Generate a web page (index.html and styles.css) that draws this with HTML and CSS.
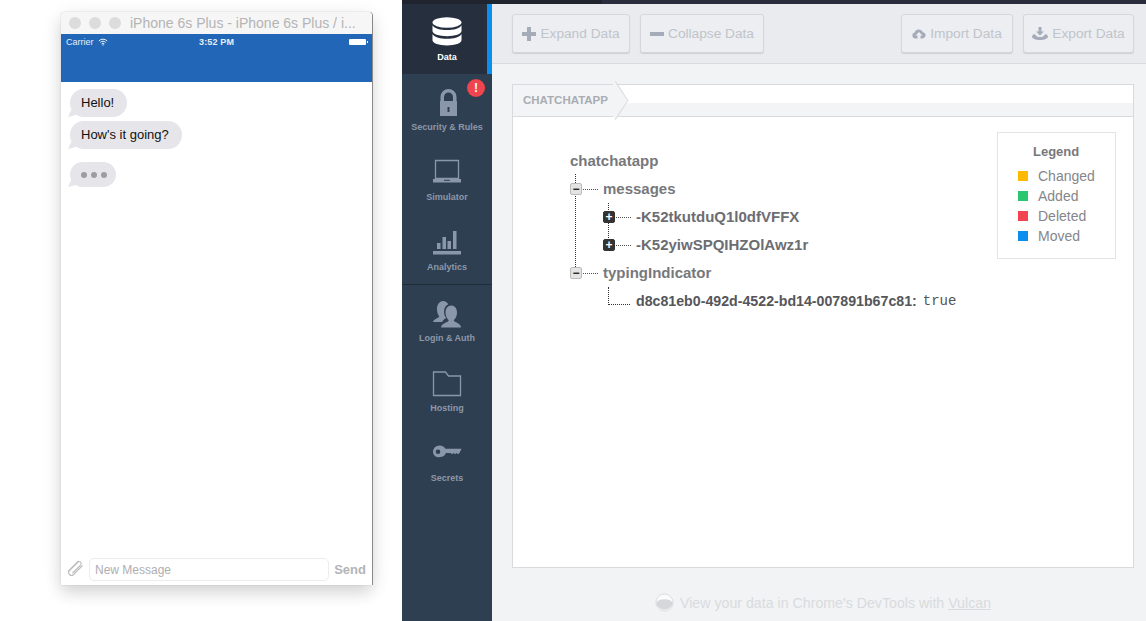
FILE: index.html
```html
<!DOCTYPE html>
<html lang="en">

<head>
    <title>Chat demo</title>
    <meta charset="utf-8">
    <link rel="stylesheet" href="styles.css">
</head>

<body>
    <div class="sim_pane">
        <div class="sim_window">
            <div class="sim_titlebar">
                <span class="sim_light"></span>
                <span class="sim_light"></span>
                <span class="sim_light"></span>
                <span class="sim_title">iPhone 6s Plus - iPhone 6s Plus / i...</span>
            </div>
            <div class="sim_navbar">
                <div class="sim_status">
                    <span class="sim_carrier">Carrier
                        <svg class="sim_wifi" viewBox="0 0 12 9" width="10" height="8">
                            <path d="M1 3.2a7 7 0 0 1 10 0M2.7 5a4.6 4.6 0 0 1 6.6 0M4.4 6.7a2.2 2.2 0 0 1 3.2 0" fill="none" stroke="#fff" stroke-width="1.1"/>
                            <circle cx="6" cy="8" r=".8" fill="#fff"/>
                        </svg>
                    </span>
                    <span class="sim_time">3:52 PM</span>
                    <span class="sim_battery"></span>
                </div>
            </div>
            <div class="sim_messages">
                <div class="bubble">Hello!</div>
                <div class="bubble">How's it going?</div>
                <div class="bubble bubble_typing"><i></i><i></i><i></i></div>
            </div>
            <div class="sim_input">
                <svg class="sim_clip" viewBox="0 0 18 18" width="18" height="18">
                    <path d="M16.5 5.5 7.5 14.5a2.8 2.8 0 0 1-4-4l8.500-8.500a2 2 0 0 1 2.800 2.800L6.500 13M12.500 1 2 11.500" fill="none" stroke="#bcbcbc" stroke-width="1.1"/>
                </svg>
                <div class="sim_field">New Message</div>
                <span class="sim_send">Send</span>
            </div>
        </div>
    </div>

    <div class="dash">
        <div class="dash_topbar"></div>
        <div class="dash_body">
            <nav class="sidebar">
                <a class="side_item side_item-active">
                    <svg viewBox="0 0 30 30" width="30" height="30">
                        <ellipse cx="15" cy="5.5" rx="14.5" ry="5.2" fill="#fff"/>
                        <path d="M.5 8.3c2 3.6 8 4.7 14.5 4.7s12.5-1.1 14.5-4.7V14c0 3.100-6.500 5.200-14.500 5.200S.5 17.100.5 14zM.5 17c2 3.600 8 4.700 14.500 4.700s12.500-1.100 14.500-4.700v6.300c0 3.100-6.500 5.200-14.500 5.200S.5 26.400.5 23.300z" fill="#fff"/>
                    </svg>
                    <span>Data</span>
                </a>
                <a class="side_item">
                    <span class="side_badge">!</span>
                    <svg viewBox="0 0 30 30" width="30" height="30">
                        <path d="M8.500 15V10a8 8 0 0 1 16 0v5H21v-5a4.500 4.500 0 0 0-9 0v5z" fill="#8a97aa"/>
                        <path d="M8 14h17v15H8z" fill="#8a97aa"/>
                        <path d="M15.500 20h2v5h-2z" fill="#2f3f52"/>
                    </svg>
                    <span>Security &amp; Rules</span>
                </a>
                <a class="side_item">
                    <svg viewBox="0 0 30 30" width="30" height="30">
                        <path d="M3.500 3.500h23v18h-23z" fill="none" stroke="#8a97aa" stroke-width="1.300"/>
                        <path d="M1 22h28v3.500H1z" fill="#8a97aa"/>
                        <path d="M12 22.800h6v1h-6z" fill="#2f3f52"/>
                    </svg>
                    <span>Simulator</span>
                </a>
                <a class="side_item side_item-last">
                    <svg viewBox="0 0 30 30" width="30" height="30">
                        <path d="M1 24h28v3.500H1zM5 16h3.500v6H5zM10.500 10H14v12h-3.500zM15.500 14H19v8h-3.500zM21 4h3.500v18H21z" fill="#8a97aa"/>
                    </svg>
                    <span>Analytics</span>
                </a>
                <a class="side_item">
                    <svg viewBox="0 0 30 30" width="30" height="30">
                        <path d="M1 24c.5-3 5-3.500 6.300-5.500-1.500-2-2.300-4.500-2.300-7.500C5 7 7.300 3 11 3c2.500 0 4.300 1.300 5.200 3.300-2.800 1.200-4.200 4-4.200 7.400 0 2.500.8 4.800 2.200 6.300-1.800 1-3.400 2.300-4 4z" fill="#8a97aa"/>
                        <path d="M9 29.500c.3-4.500 6.500-4.500 7.800-7.300-2-1.800-3.300-4.400-3.300-7.700C13.500 10.500 15.800 7.500 19.300 7.500S25 10.500 25 14.500c0 3.300-1.200 5.900-3.300 7.700C23 25 29 25 29 29.500z" fill="#8a97aa"/>
                    </svg>
                    <span>Login &amp; Auth</span>
                </a>
                <a class="side_item">
                    <svg viewBox="0 0 30 30" width="30" height="30">
                        <path d="M1.500 4h12l3 4h12v19.500h-27z" fill="none" stroke="#8a97aa" stroke-width="1.300"/>
                    </svg>
                    <span>Hosting</span>
                </a>
                <a class="side_item">
                    <svg viewBox="0 0 30 30" width="30" height="30">
                        <path fill-rule="evenodd" d="M7.500 7.500c2.800 0 5 1.300 5.900 3.200H29.500L27.500 15l-1.500 1.300-1.500-1.300-1.500 1.300-1.500-1.300-1.500 1.300-1.500-1.300h-4.600c-.9 2.400-3.100 4-5.900 4C4 20 1 17.200 1 13.800S4 7.500 7.500 7.500zM6 11.500a2.300 2.300 0 1 0 0 4.600 2.300 2.300 0 0 0 0-4.600z" fill="#8a97aa"/>
                    </svg>
                    <span>Secrets</span>
                </a>
            </nav>

            <main class="content">
                <div class="toolbar">
                    <button class="tool_btn tool_btn-expand">
                        <svg viewBox="0 0 14 14" width="14" height="14"><path d="M5 0h4v5h5v4H9v5H5V9H0V5h5z" fill="#a6abba"/></svg>
                        Expand Data
                    </button>
                    <button class="tool_btn tool_btn-collapse">
                        <svg viewBox="0 0 14 14" width="14" height="14"><path d="M0 5h14v4H0z" fill="#a6abba"/></svg>
                        Collapse Data
                    </button>
                    <button class="tool_btn tool_btn-import">
                        <svg viewBox="0 0 14 14" width="14" height="14"><path d="M3 11.500a3 3 0 0 1-.4-5.900A4.500 4.500 0 0 1 11 5.200a3.200 3.200 0 0 1 0 6.300H8.500V8.500h2L7 5 3.500 8.500h2v3z" fill="#a6abba"/></svg>
                        Import Data
                    </button>
                    <button class="tool_btn tool_btn-export">
                        <svg viewBox="0 0 16 16" width="16" height="16"><path d="M6.500 1h3v4.500H12L8 9.500l-4-4h2.500zM2.500 8 5 10.500c1 .7 5 .7 6 0L13.500 8c1.500.7 2.500 1.500 2.500 2.500 0 2-3.500 3.500-8 3.500s-8-1.500-8-3.500C0 9.500 1 8.700 2.500 8z" fill="#a6abba"/></svg>
                        Export Data
                    </button>
                </div>

                <div class="panel">
                    <div class="panel_head">
                        <div class="panel_tab">CHATCHATAPP</div>
                    </div>
                    <div class="panel_body">
                        <div class="tree">
                            <div class="tree_root">chatchatapp</div>
                            <ul class="tree_list tree_list-top">
                                <li>
                                    <div class="tree_row"><span class="toggle">&minus;</span><span class="tree_dots"></span><b>messages</b></div>
                                    <ul class="tree_list tree_list-sub">
                                        <li><div class="tree_row"><span class="toggle toggle-dark">+</span><span class="tree_dots"></span><b class="tree_key">-K52tkutduQ1l0dfVFFX</b></div></li>
                                        <li><div class="tree_row"><span class="toggle toggle-dark">+</span><span class="tree_dots"></span><b class="tree_key">-K52yiwSPQIHZOlAwz1r</b></div></li>
                                    </ul>
                                </li>
                                <li>
                                    <div class="tree_row"><span class="toggle">&minus;</span><span class="tree_dots"></span><b>typingIndicator</b></div>
                                    <div class="tree_row tree_row-leaf"><span class="tree_elbow"></span><b class="tree_key">d8c81eb0-492d-4522-bd14-007891b67c81:</b><code>true</code></div>
                                </li>
                            </ul>
                        </div>
                        <div class="legend">
                            <h4>Legend</h4>
                            <div class="legend_row"><i class="swatch swatch-changed"></i>Changed</div>
                            <div class="legend_row"><i class="swatch swatch-added"></i>Added</div>
                            <div class="legend_row"><i class="swatch swatch-deleted"></i>Deleted</div>
                            <div class="legend_row"><i class="swatch swatch-moved"></i>Moved</div>
                        </div>
                    </div>
                </div>

                <div class="foot">
                    <svg viewBox="0 0 20 20" width="19" height="19">
                        <circle cx="10" cy="10" r="9" fill="#fafbfb" stroke="#d8dadd" stroke-width="1"/>
                        <path d="M1.200 10.500C3 7.500 6 6.500 10 6.500s7 1 8.800 4A9 9 0 0 1 1.200 10.500z" fill="#d5d7da"/>
                    </svg>
                    <span>View your data in Chrome's DevTools with <u>Vulcan</u></span>
                </div>
            </main>
        </div>
    </div>
</body>

</html>
```

FILE: styles.css
```css
* {
    box-sizing: border-box;
}

body {
    font-family: "Liberation Sans", Arial, sans-serif;
    display: flex;
    width: 1146px;
    height: 621px;
    margin: 0;
    overflow: hidden;
    background: #fff;
}

/* simulator */

.sim_pane {
    width: 402px;
    flex: none;
    padding: 12px 0 0 61px;
}

.sim_window {
    width: 311px;
    height: 573px;
    display: flex;
    flex-direction: column;
    background: #fff;
    border-radius: 4px 4px 0 0;
    box-shadow: 0 0 1px 0 #999, 1px 0 0 #888, 0 8px 16px rgba(0, 0, 0, .14), 0 2px 24px rgba(0, 0, 0, .06);
}

.sim_titlebar {
    height: 22px;
    flex: none;
    display: flex;
    align-items: center;
    padding-left: 8px;
    background: #f6f6f6;
    border-radius: 4px 4px 0 0;
}

.sim_light {
    width: 12px;
    height: 12px;
    margin-right: 8px;
    border-radius: 50%;
    background: #dcdcdc;
}

.sim_title {
    margin-left: 1px;
    font-size: 14px;
    color: #b4b4b4;
    white-space: nowrap;
}

.sim_navbar {
    height: 48px;
    flex: none;
    background: #2267b7;
}

.sim_status {
    display: flex;
    align-items: center;
    height: 16px;
    padding: 0 5px;
    position: relative;
    font-size: 9px;
    color: #e6eef8;
}

.sim_carrier {
    display: flex;
    align-items: center;
    gap: 4px;
}

.sim_time {
    position: absolute;
    left: 138px;
    font-weight: bold;
    letter-spacing: .15px;
}

.sim_battery {
    position: relative;
    width: 17px;
    height: 6px;
    margin-left: auto;
    margin-right: 1px;
    background: #fff;
    border-radius: 1px;
}

.sim_battery::after {
    content: "";
    position: absolute;
    right: -2px;
    top: 2px;
    width: 1px;
    height: 2px;
    background: #fff;
}

.sim_messages {
    flex: 1;
    display: flex;
    flex-direction: column;
    align-items: flex-start;
    padding: 7px 0 0 9px;
}

.bubble {
    position: relative;
    height: 28px;
    margin-bottom: 4px;
    padding: 0 13px 0 11px;
    font-size: 13px;
    line-height: 27px;
    color: #111;
    background: #e5e5ea;
    border-radius: 14px;
}

.bubble::before {
    content: "";
    position: absolute;
    left: -2px;
    bottom: 0;
    width: 10px;
    height: 9px;
    background: #e5e5ea;
    clip-path: polygon(0 100%, 40% 0, 100% 30%, 70% 80%);
}

.bubble_typing {
    display: flex;
    align-items: center;
    gap: 4px;
    width: 46px;
    height: 25px;
    margin-top: 9px;
    padding: 0 0 0 11px;
}

.bubble_typing i {
    width: 6px;
    height: 6px;
    border-radius: 50%;
    background: #9c9ca2;
}

.sim_input {
    height: 44px;
    flex: none;
    display: flex;
    align-items: center;
    padding: 12px 6px 0 5px;
}

.sim_clip {
    flex: none;
    width: 18px;
    margin-right: 5px;
}

.sim_field {
    width: 240px;
    height: 23px;
    padding-left: 5px;
    font-size: 12px;
    line-height: 22px;
    color: #aeaeb2;
    border: 1px solid #ececec;
    border-radius: 5px;
}

.sim_send {
    margin-left: auto;
    font-size: 13px;
    font-weight: bold;
    color: #b4b4b6;
}

/* dashboard */

.dash {
    flex: 1;
    display: flex;
    flex-direction: column;
    min-width: 0;
}

.dash_topbar {
    height: 4px;
    flex: none;
    background: linear-gradient(to right, #20242e 200px, #2a2b3c 200px);
}

.dash_body {
    flex: 1;
    display: flex;
    min-height: 0;
}

.sidebar {
    width: 90px;
    flex: none;
    background: #2f3f52;
}

.side_item {
    position: relative;
    height: 70px;
    display: flex;
    flex-direction: column;
    align-items: center;
    padding-top: 13px;
    font-size: 9px;
    font-weight: bold;
    color: #8c98a8;
}

.side_item span {
    margin-top: 5px;
}

.side_item-active {
    color: #fff;
    background: #262f3e;
    border-right: 5px solid #0a8fef;
    padding-left: 5px;
}

.side_item-last {
    height: 71px;
    border-bottom: 1px solid #212c39;
}

.side_item .side_badge {
    position: absolute;
    top: 5px;
    left: 65px;
    width: 18px;
    height: 18px;
    margin: 0;
    font-size: 12px;
    line-height: 18px;
    text-align: center;
    color: #fff;
    background: #f0444e;
    border-radius: 50%;
}

.content {
    flex: 1;
    display: flex;
    flex-direction: column;
    min-width: 0;
    background: #f1f3f5;
}

.toolbar {
    height: 60px;
    flex: none;
    display: flex;
    gap: 10px;
    padding: 10px 12px 0 20px;
    background: #e9ebee;
    border-bottom: 1px solid #d8dadd;
}

.tool_btn {
    height: 39px;
    display: flex;
    align-items: center;
    justify-content: center;
    gap: 4px;
    padding: 0;
    font-family: inherit;
    font-size: 13.7px;
    color: #c0c4cb;
    background: #eceef1;
    border: 1px solid #d5d7dc;
    border-radius: 3px;
    box-shadow: 0 1px 1px rgba(0, 0, 0, .12);
}

.tool_btn-expand {
    width: 118px;
}

.tool_btn-collapse {
    width: 124px;
    margin-right: auto;
}

.tool_btn-import {
    width: 112px;
}

.tool_btn-export {
    width: 111px;
}

.panel {
    height: 484px;
    flex: none;
    display: flex;
    flex-direction: column;
    margin: 20px 12px 0 20px;
    background: #fff;
    border: 1px solid #d8dadd;
}

.panel_head {
    height: 32px;
    flex: none;
    background: linear-gradient(#fff 18px, #f3f4f6 18px);
    border-bottom: 1px solid #d8dadd;
}

.panel_tab {
    position: relative;
    isolation: isolate;
    width: 103px;
    height: 31px;
    padding-left: 10px;
    font-size: 11.5px;
    font-weight: bold;
    line-height: 31px;
    color: #a9acb2;
    background: #f3f4f6;
}

.panel_tab::after {
    content: "";
    position: absolute;
    z-index: -1;
    top: 4px;
    right: -11px;
    width: 22px;
    height: 22px;
    background: #f3f4f6;
    border-top: 1px solid #d8dadd;
    border-right: 1px solid #d8dadd;
    transform: rotate(45deg) skew(12deg, 12deg);
}

.panel_body {
    flex: 1;
    position: relative;
    padding: 30px 0 0 57px;
}

.tree {
    font-size: 15px;
    color: #77787c;
}

.tree_root {
    height: 28px;
    line-height: 28px;
    font-weight: bold;
}

.tree_list {
    position: relative;
    margin: 0;
    padding: 0;
    list-style: none;
}

.tree_list-top::before {
    content: "";
    position: absolute;
    left: 5px;
    top: -1px;
    height: 93px;
    border-left: 1px dotted #333;
}

.tree_list-sub {
    padding-left: 33px;
}

.tree_list-sub::before {
    content: "";
    position: absolute;
    left: 38px;
    top: 0;
    height: 35px;
    border-left: 1px dotted #333;
}

.tree_row {
    position: relative;
    height: 28px;
    display: flex;
    align-items: center;
}

.tree_row b {
    margin-top: -2px;
}

.toggle {
    position: relative;
    width: 12px;
    height: 12px;
    flex: none;
    font-size: 12px;
    font-weight: bold;
    line-height: 10px;
    text-align: center;
    color: #222;
    background: #e4e4e4;
    border: 1px solid #bbb;
    border-radius: 2px;
}

.toggle-dark {
    color: #fff;
    background: #333;
    border-color: #333;
}

.tree_dots {
    width: 15px;
    margin: 0 5px 0 1px;
    border-top: 1px dotted #555;
}

.tree_key {
    color: #6c6d72;
}

.tree_row-leaf {
    padding-left: 33px;
}

.tree_elbow {
    width: 22px;
    height: 18px;
    margin: -10px 6px 0 5px;
    border-left: 1px dotted #333;
    border-bottom: 1px dotted #333;
}

.tree_row-leaf .tree_key {
    margin-top: 0;
    color: #55565a;
    font-size: 14.2px;
}

.tree_row-leaf code {
    margin-left: 6px;
    font-family: "Liberation Mono", monospace;
    font-size: 14px;
    color: #555;
}

.legend {
    position: absolute;
    top: 15px;
    right: 17px;
    width: 119px;
    height: 127px;
    padding: 11px 0 0 20px;
    background: #fff;
    border: 1px solid #e2e4e6;
}

.legend h4 {
    margin: 0 0 7px 15px;
    font-size: 13px;
    line-height: 15px;
    color: #77787c;
}

.legend_row {
    display: flex;
    align-items: center;
    height: 20px;
    font-size: 14px;
    color: #85868a;
}

.swatch {
    width: 10px;
    height: 10px;
    margin-right: 10px;
}

.swatch-changed {
    background: #ffb900;
}

.swatch-added {
    background: #29c76f;
}

.swatch-deleted {
    background: #f44450;
}

.swatch-moved {
    background: #0a8fef;
}

.foot {
    display: flex;
    align-items: center;
    gap: 6px;
    padding: 25px 0 0 163px;
    font-size: 14.2px;
    color: #d9dbde;
}
```
